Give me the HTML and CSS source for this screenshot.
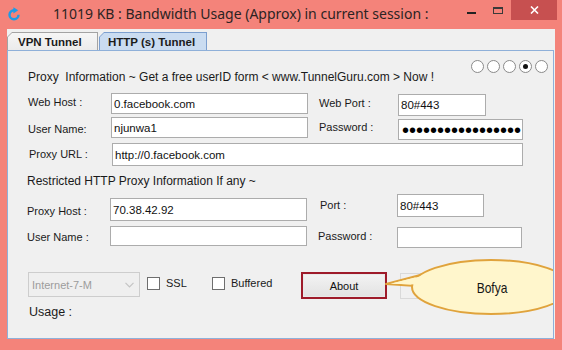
FILE: index.html
```html
<!DOCTYPE html>
<html>
<head>
<meta charset="utf-8">
<link rel="stylesheet" href="styles.css">
</head>
<body>
<div class="window">
  <div class="titlebar">
    <svg class="app-icon" viewBox="0 0 14 14"><path d="M7 3.3 A4.5 4.5 0 1 0 11.5 7.8" fill="none" stroke="#1d9be6" stroke-width="2.4"/><path d="M6.4 0.2 L11.2 3.3 L6.4 6.4 Z" fill="#1d9be6"/></svg>
    <div class="title">11019 KB : Bandwidth Usage (Approx) in current session :</div>
    <div class="controls">
      <div class="ctl ctl-min"><span class="min-glyph"></span></div>
      <div class="ctl ctl-max"><span class="max-glyph"></span></div>
      <div class="ctl ctl-close"><svg width="9" height="8" viewBox="0 0 9 8"><path d="M1 0.5 L8 7.5 M8 0.5 L1 7.5" stroke="#fff" stroke-width="1.6"/></svg></div>
    </div>
  </div>
  <div class="client">
    <div class="tabs">
      <div class="tab"><div class="tab-in">VPN Tunnel</div></div>
      <div class="tab tab-sel"><div class="tab-in">HTTP (s) Tunnel</div></div>
    </div>
    <div class="panel">
      <div class="row row-hdr">
        <div class="hdr">Proxy&nbsp; Information ~ Get a free userID form &lt; www.TunnelGuru.com &gt; Now !</div>
        <div class="radios"><span class="rb"></span><span class="rb"></span><span class="rb"></span><span class="rb on"></span><span class="rb"></span></div>
      </div>

      <div class="row row-web">
        <div class="lbl lbl-a mt2">Web Host :</div>
        <div class="fld fld-a h21">0.facebook.com</div>
        <div class="lbl lbl-b mt3">Web Port :</div>
        <div class="fld fld-port h22 mt1">80#443</div>
      </div>

      <div class="row row-user">
        <div class="lbl lbl-a mt5">User Name:</div>
        <div class="fld fld-a h21">njunwa1</div>
        <div class="lbl lbl-b mt3">Password :</div>
        <div class="fld fld-pass h21 mt2"><span class="dots">•••••••••••••••••</span></div>
      </div>

      <div class="row row-url">
        <div class="lbl lbl-url mt4">Proxy URL :</div>
        <div class="fld fld-url h23">http://0.facebook.com</div>
      </div>

      <div class="row row-sub">
        <div class="hdr sub">Restricted HTTP Proxy Information If any ~</div>
      </div>

      <div class="row row-phost">
        <div class="lbl lbl-c mt10">Proxy Host :</div>
        <div class="fld fld-a h23 mt4 shift">70.38.42.92</div>
        <div class="lbl lbl-port mt4">Port :</div>
        <div class="fld fld-port2 h23">80#443</div>
      </div>

      <div class="row row-user2">
        <div class="lbl lbl-c mt4">User Name :</div>
        <div class="fld fld-a h20 shift"></div>
        <div class="lbl lbl-b mt3">Password :</div>
        <div class="fld fld-pass h21 mt1"></div>
      </div>

      <div class="row row-bottom">
        <div class="combo">
          <span class="combo-text">Internet-7-M</span>
          <svg class="chev" width="9" height="6" viewBox="0 0 9 6"><path d="M0.5 0.8 L4.5 4.8 L8.5 0.8" fill="none" stroke="#c4c4c4" stroke-width="1.2"/></svg>
        </div>
        <div class="chk chk-ssl"><span class="box"></span><span class="chk-text">SSL</span></div>
        <div class="chk chk-buf"><span class="box"></span><span class="chk-text">Buffered</span></div>
        <div class="btn btn-about">About</div>
        <div class="btn btn-off"></div>
      </div>

      <div class="row row-usage">
        <div class="usage">Usage :</div>
      </div>
    </div>
  </div>

  <div class="balloon">
    <svg width="190" height="65" viewBox="0 0 190 65">
      <polygon points="6,29 44,19 36,31" fill="#fff6cc" stroke="#e0a33c" stroke-width="2" stroke-linejoin="round"/>
      <ellipse cx="111" cy="32" rx="79" ry="27" fill="#fff6cc" stroke="#e0a33c" stroke-width="2"/>
      <polygon points="10,28.8 44,20.6 37,29.6" fill="#fff6cc"/>
    </svg>
    <span class="balloon-text">Bofya</span>
  </div>
</div>
</body>
</html>
```

FILE: styles.css
```css
body {
  margin: 0;
  background: #f4837a;
  font-family: "Liberation Sans", Arial, sans-serif;
}

.window {
  position: relative;
  width: 562px;
  height: 350px;
  overflow: hidden;
  background: #f4837a;
}

/* title bar */
.titlebar {
  display: flex;
  align-items: flex-start;
  height: 29px;
}

.app-icon {
  width: 14px;
  height: 14px;
  margin: 7px 0 0 7px;
  flex: none;
}

.title {
  margin: 4px 0 0 32px;
  font-family: "Noto Sans", "Open Sans", sans-serif;
  font-size: 14px;
  line-height: 19px;
  color: #2c2323;
  white-space: nowrap;
}

.controls {
  margin-left: auto;
  margin-right: 5px;
  display: flex;
}

.ctl {
  height: 20px;
  display: flex;
  align-items: center;
  justify-content: center;
}

.ctl-min { width: 26px; }
.ctl-max { width: 27px; }
.ctl-close { width: 46px; background: #c75050; }

.min-glyph {
  width: 9px;
  height: 2px;
  background: #222;
  margin-top: 5px;
}

.max-glyph {
  box-sizing: border-box;
  width: 10px;
  height: 7px;
  border: 1px solid #3a3a3a;
  border-top-width: 2px;
}

/* client */
.client {
  margin: 0 7px;
  height: 310px;
  background: #f0f0f0;
}

.tabs {
  display: flex;
  height: 21px;
  padding-top: 3px;
  box-sizing: border-box;
}

.tab {
  box-sizing: border-box;
  width: 91px;
  height: 18px;
  padding: 1px 1px 0 1px;
  background: #a3a3a3;
  clip-path: polygon(5px 0, 100% 0, 100% 100%, 0 100%, 0 5px);
}

.tab-in {
  height: 100%;
  display: flex;
  align-items: center;
  padding-left: 10px;
  background: linear-gradient(#f6f6f6, #ebebeb);
  clip-path: polygon(4px 0, 100% 0, 100% 100%, 0 100%, 0 4px);
  font-size: 11.5px;
  font-weight: bold;
  color: #1b1b1b;
  white-space: nowrap;
}

.tab-sel {
  width: 108px;
  margin-left: 1px;
  background: #7c9fcf;
}

.tab-sel .tab-in {
  padding-left: 8px;
  background: #cadcf1;
}

.panel {
  box-sizing: border-box;
  height: 289px;
  margin-right: 1px;
  border: 1px solid #8fb0d9;
  padding-left: 20px;
}

.row {
  display: flex;
  align-items: flex-start;
}

.row-hdr { margin-top: 9px; height: 24px; }
.row-web { margin-top: 9px; height: 23px; }
.row-user { margin-top: 1px; height: 23px; }
.row-url { margin-top: 3px; height: 23px; }
.row-sub { margin-top: 8px; height: 14px; }
.row-phost { margin-top: 6px; height: 27px; }
.row-user2 { margin-top: 5px; height: 22px; }
.row-bottom { margin-top: 24px; height: 27px; }
.row-usage { margin-top: 5px; }

.hdr {
  margin-top: 10px;
  font-size: 12px;
  line-height: 14px;
  color: #1a1a1a;
  white-space: nowrap;
}

.hdr.sub {
  margin-top: 0;
  margin-left: -1px;
}

.radios {
  margin-left: auto;
  margin-right: 5px;
  display: flex;
  gap: 3px;
}

.rb {
  position: relative;
  box-sizing: border-box;
  width: 13px;
  height: 13px;
  border: 1px solid #8a8a8a;
  border-radius: 50%;
  background: #fff;
}

.rb.on::after {
  content: "";
  position: absolute;
  left: 3px;
  top: 3px;
  width: 5px;
  height: 5px;
  border-radius: 50%;
  background: #111;
}

.lbl {
  flex: none;
  font-size: 11px;
  line-height: 14px;
  color: #1a1a1a;
  white-space: nowrap;
}

.lbl-a { width: 83px; }
.lbl-b { width: 79px; margin-left: 11px; }
.lbl-url { width: 83px; margin-left: 1px; }
.lbl-c { width: 83px; margin-left: -1px; }
.lbl-port { width: 77px; margin-left: 13px; }

.mt1 { margin-top: 1px; }
.mt2 { margin-top: 2px; }
.mt3 { margin-top: 3px; }
.mt4 { margin-top: 4px; }
.mt5 { margin-top: 5px; }
.mt10 { margin-top: 10px; }

.fld {
  flex: none;
  box-sizing: border-box;
  display: flex;
  align-items: center;
  padding: 0 2px;
  border: 1px solid #acacac;
  background: #fff;
  font-size: 11.5px;
  color: #111;
  white-space: nowrap;
  overflow: hidden;
}

.h20 { height: 20px; }
.h21 { height: 21px; }
.h22 { height: 22px; }
.h23 { height: 23px; }

.fld-a { width: 197px; }
.fld-port { width: 88px; }
.fld-port2 { width: 87px; }
.fld-pass { width: 125px; }
.fld-url { width: 411px; }

.dots {
  font-size: 20px;
  line-height: 16px;
  color: #000;
  letter-spacing: 0;
  padding-left: 1px;
}

/* bottom row */
.combo {
  box-sizing: border-box;
  width: 112px;
  height: 25px;
  display: flex;
  align-items: center;
  padding: 0 5px 0 3px;
  border: 1px solid #cdcdcd;
  background: #efefef;
}

.combo-text {
  font-size: 11px;
  color: #9c9c9c;
}

.chev { margin-left: auto; }

.chk {
  display: flex;
  align-items: flex-start;
}

.chk-ssl { width: 65px; margin-left: 7px; }
.chk-buf { width: 89px; }

.box {
  box-sizing: border-box;
  width: 13px;
  height: 13px;
  margin-top: 5px;
  border: 1px solid #6e6e6e;
  background: #fff;
}

.chk-text {
  margin: 4px 0 0 6px;
  font-size: 11px;
  line-height: 14px;
  color: #1a1a1a;
}

.btn {
  box-sizing: border-box;
  width: 86px;
  display: flex;
  align-items: center;
  justify-content: center;
  font-size: 11px;
  color: #111;
}

.btn-about {
  height: 27px;
  border: 2px solid #9e1b2a;
  background: linear-gradient(#f3f3f3, #e2e2e2);
  box-shadow: inset 0 0 0 1px #e9e9e9;
}

.btn-off {
  height: 26px;
  margin: 1px 0 0 13px;
  border: 1px solid #d9d9d9;
  background: #f0f0f0;
}

.usage {
  margin-left: 1px;
  font-size: 12.5px;
  line-height: 16px;
  color: #1a1a1a;
}

/* callout balloon over the form */
.balloon {
  position: absolute;
  left: 380px;
  top: 255px;
  width: 173px;
  height: 65px;
  overflow: hidden;
}

.balloon svg {
  position: absolute;
  left: 0;
  top: 0;
}

.balloon-text {
  position: absolute;
  left: 0;
  top: 24px;
  width: 224px;
  height: 17px;
  text-align: center;
  font-size: 15px;
  line-height: 17px;
  color: #151515;
  transform: scaleX(0.8);
}
```
